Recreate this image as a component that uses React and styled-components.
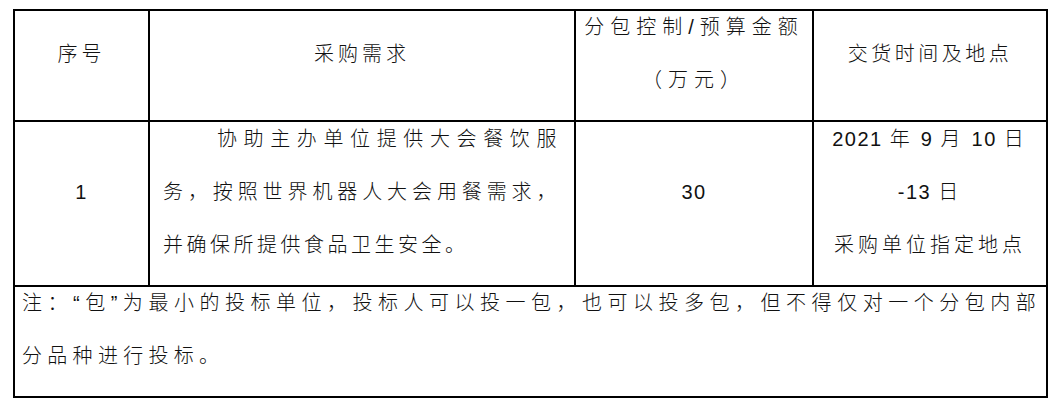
import styled, { createGlobalStyle } from "styled-components"

const GlobalStyle = createGlobalStyle`
body {
    margin: 0;
    background: #fff;
    font-family: "Liberation Sans", "Noto Sans CJK SC", sans-serif;
    font-weight: 300;
    color: #111;
}
`

const App = () => {
    return (
        <>
            <GlobalStyle />
            <Page lang="zh-CN">
                <Table>
                    <Cell $spacing={4}><Text>序号</Text></Cell>
                    <Cell $spacing={4}><Text>采购需求</Text></Cell>
                    <Cell $spacing={6}>
                        <Text>分包控制/预算金额<br />（万元）</Text>
                    </Cell>
                    <Cell $spacing={3.5}><Text>交货时间及地点</Text></Cell>

                    <Cell><Text><Num>1</Num></Text></Cell>
                    <Cell $padLeft={13} $padRight={14} $spacing={3.5}>
                        <Para>协助主办单位提供大会餐饮服务，按照世界机器人大会用餐需求，并确保所提供食品卫生安全。</Para>
                    </Cell>
                    <Cell><Text><Num>30</Num></Text></Cell>
                    <Cell $spacing={4}>
                        <Text>
                            <Num>2021 </Num>年<Num> 9 </Num>月<Num> 10 </Num>日<br />
                            <Num>-13 </Num>日<br />
                            采购单位指定地点
                        </Text>
                    </Cell>

                    <NoteCell>
                        <Para $indent={0}>注：“包”为最小的投标单位，投标人可以投一包，也可以投多包，但不得仅对一个分包内部分品种进行投标。</Para>
                    </NoteCell>
                </Table>
            </Page>
        </>
    )
}

const Page = styled.div`
padding: 9px 0 0 13px;
`

const Table = styled.div`
display: grid;
grid-template-columns: 133px 424px 236px 232px;
grid-template-rows: 109px 163px 109px;
gap: 2px;
padding: 2px;
background: #000;
width: max-content;
`

const Cell = styled.div`
background: #fff;
display: flex;
flex-direction: column;
justify-content: center;
padding: 0 ${p => p.$padRight || 0}px 23px ${p => p.$padLeft || 0}px;
font-size: 20px;
line-height: 53px;
letter-spacing: ${p => p.$spacing || 0}px;
`

const Text = styled.div`
text-align: center;
white-space: nowrap;
`

const Para = styled.p`
margin: 0;
text-indent: ${p => p.$indent ?? 54}px;
text-align: justify;
`

const Num = styled.span`
letter-spacing: 1.5px;
font-weight: 400;
`

const NoteCell = styled.div`
grid-column: 1 / -1;
background: #fff;
display: flex;
flex-direction: column;
justify-content: center;
padding: 0 5px 23px 7px;
font-size: 20px;
line-height: 53px;
letter-spacing: 5.3px;
`

export default App
